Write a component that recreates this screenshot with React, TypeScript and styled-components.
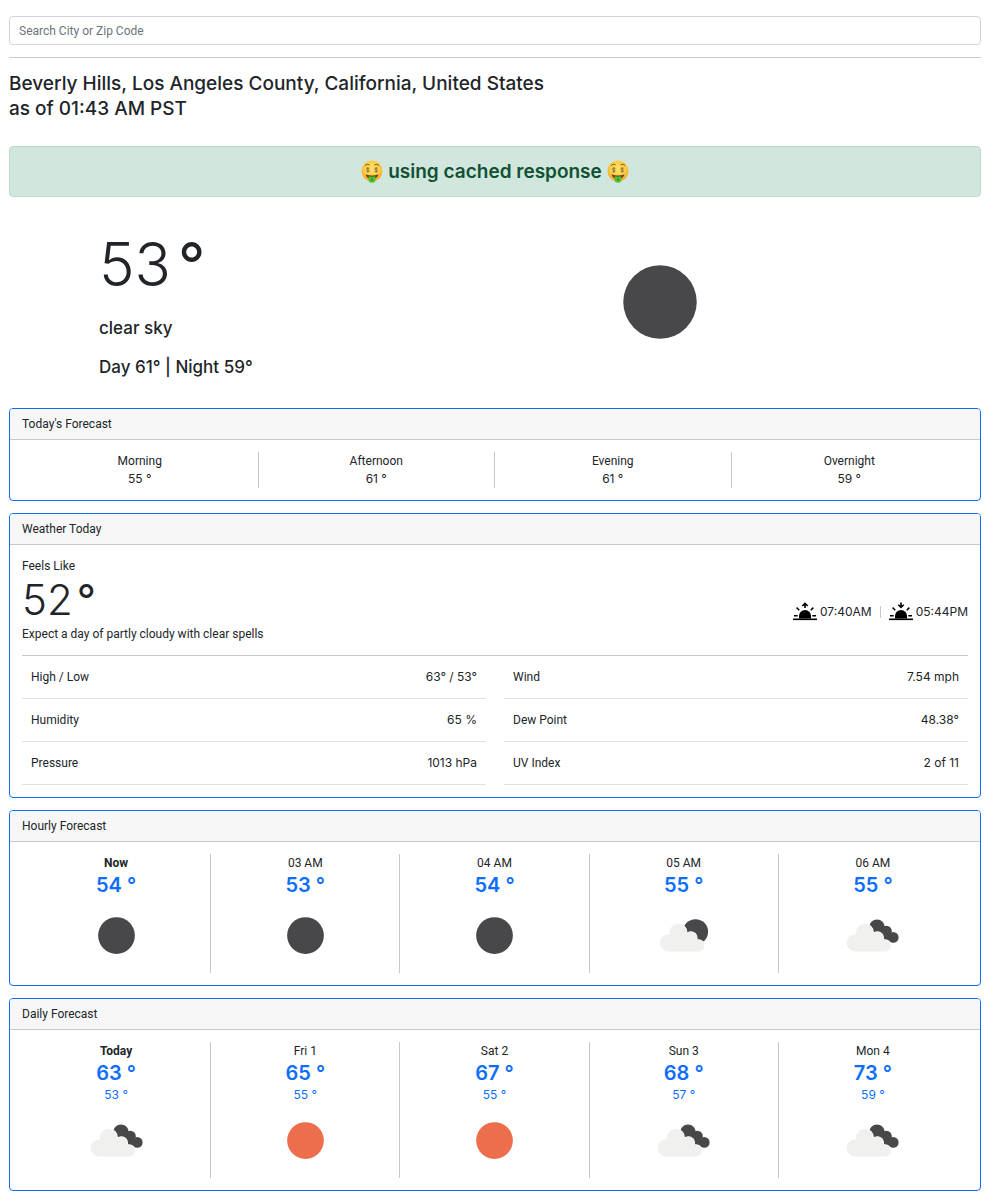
import React from 'react';
import styled, { createGlobalStyle } from 'styled-components';

const Global = createGlobalStyle`
  *, *::before, *::after { box-sizing: border-box; }
  body {
    margin: 0;
    background: #fff;
    color: #212529;
    font-family: Roboto, 'Liberation Sans', sans-serif;
    font-size: 12px;
    line-height: 18px;
  }
`;

const display = "Inter, 'Liberation Sans', sans-serif";

const Page = styled.main`
  padding: 16px 9px 12px;
`;

const SearchInput = styled.input`
  display: block;
  width: 100%;
  height: 29px;
  padding: 0 9px;
  border: 1px solid #ced4da;
  border-radius: 4px;
  background: #fff;
  color: #212529;
  font: inherit;
  &::placeholder { color: #6c757d; opacity: 1; }
`;

const Rule = styled.hr<{ $flush?: boolean }>`
  height: 1px;
  margin: 12px 0 ${(p) => (p.$flush ? 0 : 12)}px;
  border: 0;
  background: #c8c9ca;
`;

const Place = styled.h1`
  margin: 0 0 25px;
  padding-top: 1px;
  font-family: ${display};
  font-size: 19px;
  font-weight: 500;
  line-height: 25px;
`;

const Alert = styled.div`
  display: flex;
  justify-content: center;
  align-items: center;
  gap: 5px;
  height: 51px;
  border: 1px solid #badbcc;
  border-radius: 4px;
  background: #d1e7dd;
  color: #0f5132;
  font-family: ${display};
  font-size: 19px;
  font-weight: 600;
`;

const Current = styled.section`
  display: grid;
  grid-template-columns: 1fr 1fr;
  align-items: start;
  padding: 36px 0 30px;
`;

const CurrentCell = styled.div`
  padding-left: 90px;
`;

const Degree = styled.span`
  font-weight: 400;
`;

const BigTemp = styled.div`
  display: flex;
  gap: 7px;
  margin-bottom: 22px;
  font-family: ${display};
  font-size: 60px;
  font-weight: 300;
  line-height: 62px;
`;

const Detail = styled.p`
  margin: 0 0 17px;
  font-family: ${display};
  font-size: 17px;
  font-weight: 500;
  line-height: 22px;
  &:last-child { margin: 0; }
`;

const Card = styled.section`
  margin-bottom: 12px;
  border: 1px solid #0d6efd;
  border-radius: 4px;
`;

const CardHeader = styled.h2`
  margin: 0;
  padding: 6px 12px;
  border-bottom: 1px solid #c8c9ca;
  border-radius: 3px 3px 0 0;
  background: #f7f7f7;
  font-size: 12px;
  font-weight: 400;
`;

const CardBody = styled.div`
  padding: 12px;
`;

const Columns = styled.div<{ $count: number }>`
  display: grid;
  grid-template-columns: repeat(${(p) => p.$count}, 1fr);
`;

const Column = styled.div`
  display: flex;
  flex-direction: column;
  align-items: center;
  border-right: 1px solid #c8c9ca;
  &:last-child { border-right-color: transparent; }
`;

const Label = styled.span<{ $strong?: boolean }>`
  font-weight: ${(p) => (p.$strong ? 700 : 400)};
`;

const PartTemp = styled.span`
  font-family: ${display};
`;

const Temp = styled.span`
  color: #0d6efd;
  font-family: ${display};
  font-size: 20px;
  font-weight: 600;
  line-height: 26px;
`;

const Low = styled.span`
  color: #0d6efd;
  font-family: ${display};
  line-height: 17px;
`;

const IconBox = styled.div<{ $size?: number }>`
  width: ${(p) => p.$size ?? 75}px;
  height: ${(p) => p.$size ?? 75}px;
  svg { display: block; width: 100%; height: 100%; }
`;

const CurrentIcon = styled(IconBox)`
  margin: -6px 0 0;
`;

const Feels = styled.div`
  display: flex;
  justify-content: space-between;
  align-items: flex-end;
`;

const FeelsTemp = styled.div`
  display: flex;
  gap: 4px;
  font-family: ${display};
  font-size: 42px;
  font-weight: 300;
  line-height: 50px;
`;

const SunTimes = styled.div`
  display: flex;
  align-items: center;
  margin-bottom: 19px;
  font-family: ${display};
`;

const SunTime = styled.span`
  display: flex;
  align-items: center;
  gap: 3px;
`;

const Tick = styled.span`
  width: 1px;
  height: 12px;
  margin: 0 8px;
  background: #c8c9ca;
`;

const Tables = styled.div`
  display: grid;
  grid-template-columns: 1fr 1fr;
  gap: 18px;
`;

const Table = styled.table`
  width: 100%;
  border-collapse: separate;
  border-spacing: 0;
  th, td {
    height: 43px;
    padding: 0 9px;
    border-bottom: 1px solid #dee2e6;
    font-weight: 400;
    text-align: left;
  }
  td { font-family: ${display}; text-align: right; }
`;

const Disc = ({ color }: { color: string }) => (
  <svg viewBox="0 0 100 100" aria-hidden="true"><circle cx="50" cy="50" r="24.5" fill={color} /></svg>
);

const cloudShapes = (
  <>
    <circle cx="27" cy="59.8" r="11.6" />
    <circle cx="39.4" cy="46.2" r="11.8" />
    <circle cx="56.5" cy="53.2" r="8.2" />
    <circle cx="66.6" cy="63.5" r="7.9" />
    <path d="M27 50 40 44 57 51 66 57V71.400H27z" />
  </>
);

const Cloud = () => (
  <>
    <g fill="#fff" stroke="#fff" strokeWidth="1.5">{cloudShapes}</g>
    <g fill="#f0f0ef">{cloudShapes}</g>
  </>
);

const MoonCloud = () => (
  <svg viewBox="0 0 100 100" aria-hidden="true">
    <circle cx="66" cy="45" r="16.8" fill="#48484a" />
    <g transform="translate(3.4 0)"><Cloud /></g>
  </svg>
);

const Clouds = () => (
  <svg viewBox="0 0 100 100" aria-hidden="true">
    <g fill="#48484a">
      <circle cx="56" cy="39" r="10.4" />
      <circle cx="68.500" cy="44.200" r="7.200" />
      <circle cx="77.600" cy="52.500" r="7.200" />
      <path d="M52 46 66 38 75 58 68 60z" />
    </g>
    <Cloud />
  </svg>
);

type Kind = 'moon' | 'sun' | 'moonCloud' | 'clouds';

const WeatherIcon = ({ kind }: { kind: Kind }) => {
  if (kind === 'moon') return <Disc color="#48484a" />;
  if (kind === 'sun') return <Disc color="#ec6e4c" />;
  return kind === 'moonCloud' ? <MoonCloud /> : <Clouds />;
};

const HorizonIcon = ({ up }: { up?: boolean }) => (
  <svg width="24" height="24" viewBox="0 0 24 24" fill="none" stroke="#000" strokeWidth="1.5" aria-hidden="true">
    <path d="M6 18.500V16a6 6 0 0 1 12 0v2.500z" fill="#000" stroke="none" />
    <path d="M0 19.300H24" strokeWidth="1.600" />
    <path d="M1 15.700H4.700M19.300 15.700H23M3.600 7.600 6.300 10.200M20.400 7.600 17.700 10.200" />
    {up ? <path d="M12 8V3.200M9.300 6 12 3.300 14.700 6" strokeWidth="1.600" /> : <path d="M12 2.500V7.300M9.300 4.700 12 7.400 14.700 4.700" strokeWidth="1.600" />}
  </svg>
);

const MoneyFace = () => (
  <svg width="22" height="24" viewBox="0 0 22 24" aria-hidden="true">
    <defs>
      <radialGradient id="face" cx="50%" cy="40%" r="60%">
        <stop offset="0" stopColor="#ffe56a" />
        <stop offset="0.650" stopColor="#fdcb3f" />
        <stop offset="1" stopColor="#ee9f2c" />
      </radialGradient>
    </defs>
    <circle cx="11" cy="11" r="10.500" fill="url(#face)" />
    <path d="M4.200 5.300Q6 3.400 8.200 4.600M13.800 4.600Q16 3.400 17.800 5.300" fill="none" stroke="#8a5a1c" strokeWidth="1" strokeLinecap="round" />
    <g fill="#f0cf62"><circle cx="6.800" cy="9.800" r="3" /><circle cx="15.200" cy="9.800" r="3" /></g>
    <g fill="none" stroke="#8d6c22" strokeWidth="0.800">
      <path d="M8.200 8.500Q6.800 7.500 5.700 8.500Q5.200 9.600 6.800 9.900Q8.600 10.300 7.900 11.400Q6.800 12.300 5.400 11.200M6.800 7.100V12.700" />
      <path d="M16.600 8.500Q15.200 7.500 14.100 8.500Q13.600 9.600 15.200 9.900Q17 10.300 16.300 11.400Q15.200 12.300 13.800 11.200M15.200 7.100V12.700" />
    </g>
    <path d="M4.500 14.200Q11 16.600 17.500 14.200Q16.600 19 11 19Q5.400 19 4.500 14.200z" fill="#70401a" />
    <path d="M7.700 16.300Q11 17 14.300 16.300V20.500Q14 22.700 11 22.700Q8 22.700 7.700 20.500z" fill="#4fc433" />
    <path d="M11 18V21" stroke="#2c8a1e" strokeWidth="1.200" />
  </svg>
);

const parts: [string, string][] = [['Morning', '55 °'], ['Afternoon', '61 °'], ['Evening', '61 °'], ['Overnight', '59 °']];
const left: [string, string][] = [['High / Low', '63° / 53°'], ['Humidity', '65 %'], ['Pressure', '1013 hPa']];
const right: [string, string][] = [['Wind', '7.54 mph'], ['Dew Point', '48.38°'], ['UV Index', '2 of 11']];
const hours: [string, string, Kind][] = [
  ['Now', '54 °', 'moon'],
  ['03 AM', '53 °', 'moon'],
  ['04 AM', '54 °', 'moon'],
  ['05 AM', '55 °', 'moonCloud'],
  ['06 AM', '55 °', 'clouds'],
];
const days: [string, string, string, Kind][] = [
  ['Today', '63 °', '53 °', 'clouds'],
  ['Fri 1', '65 °', '55 °', 'sun'],
  ['Sat 2', '67 °', '55 °', 'sun'],
  ['Sun 3', '68 °', '57 °', 'clouds'],
  ['Mon 4', '73 °', '59 °', 'clouds'],
];

const Facts = ({ rows }: { rows: [string, string][] }) => (
  <Table>
    <tbody>
      {rows.map(([k, v]) => (
        <tr key={k}><th scope="row">{k}</th><td>{v}</td></tr>
      ))}
    </tbody>
  </Table>
);

export default function App() {
  return (
    <>
      <Global />
      <Page>
        <SearchInput type="text" aria-label="Search City or Zip Code" placeholder="Search City or Zip Code" />
        <Rule />
        <Place>Beverly Hills, Los Angeles County, California, United States<br />as of 01:43 AM PST</Place>
        <Alert role="alert"><MoneyFace />using cached response<MoneyFace /></Alert>
        <Current>
          <CurrentCell>
            <BigTemp>53 <Degree>°</Degree></BigTemp>
            <Detail>clear sky</Detail>
            <Detail>Day 61° | Night 59°</Detail>
          </CurrentCell>
          <CurrentCell>
            <CurrentIcon $size={150}><WeatherIcon kind="moon" /></CurrentIcon>
          </CurrentCell>
        </Current>
        <Card>
          <CardHeader>Today's Forecast</CardHeader>
          <CardBody>
            <Columns $count={4}>
              {parts.map(([n, t]) => <Column key={n}><Label>{n}</Label><PartTemp>{t}</PartTemp></Column>)}
            </Columns>
          </CardBody>
        </Card>
        <Card>
          <CardHeader>Weather Today</CardHeader>
          <CardBody>
            <Feels>
              <div>
                <div>Feels Like</div>
                <FeelsTemp>52 <Degree>°</Degree></FeelsTemp>
                <div>Expect a day of partly cloudy with clear spells</div>
              </div>
              <SunTimes>
                <SunTime><HorizonIcon up />07:40AM</SunTime>
                <Tick />
                <SunTime><HorizonIcon />05:44PM</SunTime>
              </SunTimes>
            </Feels>
            <Rule $flush />
            <Tables><Facts rows={left} /><Facts rows={right} /></Tables>
          </CardBody>
        </Card>
        <Card>
          <CardHeader>Hourly Forecast</CardHeader>
          <CardBody>
            <Columns $count={5}>
              {hours.map(([n, t, k], i) => (
                <Column key={n}>
                  <Label $strong={i === 0}>{n}</Label>
                  <Temp>{t}</Temp>
                  <IconBox><WeatherIcon kind={k} /></IconBox>
                </Column>
              ))}
            </Columns>
          </CardBody>
        </Card>
        <Card>
          <CardHeader>Daily Forecast</CardHeader>
          <CardBody>
            <Columns $count={5}>
              {days.map(([n, t, l, k], i) => (
                <Column key={n}>
                  <Label $strong={i === 0}>{n}</Label>
                  <Temp>{t}</Temp>
                  <Low>{l}</Low>
                  <IconBox><WeatherIcon kind={k} /></IconBox>
                </Column>
              ))}
            </Columns>
          </CardBody>
        </Card>
      </Page>
    </>
  );
}
